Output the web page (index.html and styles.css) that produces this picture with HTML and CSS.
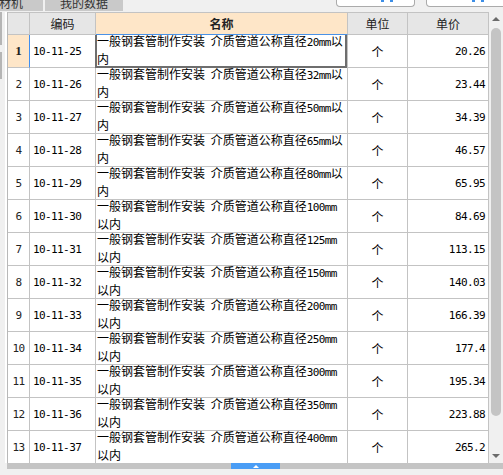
FILE: index.html
```html
<!DOCTYPE html>
<html lang="zh-CN">
<head>
<meta charset="utf-8">
<title>定额列表</title>
<link rel="stylesheet" href="styles.css">
</head>
<body>
<div class="app">
  <div class="topbar">
    <div class="tab tab1"><span>人材机</span></div>
    <div class="tab tab2"><span>我的数据</span></div>
    <div class="btn btn1"><i></i></div>
    <div class="btn btn2"><i></i></div>
  </div>
  <div class="main">
    <div class="leftpanel"><i class="seg s1"></i><i class="seg s2"></i></div>
    <div class="grid">
      <div class="row head">
        <div class="c rn"></div>
        <div class="c code">编码</div>
        <div class="c name sel">名称</div>
        <div class="c unit">单位</div>
        <div class="c price">单价</div>
      </div>
      <div class="row cur">
        <div class="c rn">1</div>
        <div class="c code"><span class="num">10-11-25</span></div>
        <div class="c name"><span>一般钢套管制作安装 介质管道公称直径<span class="num">20mm</span>以<br>内</span></div>
        <div class="c unit">个</div>
        <div class="c price"><span class="num">20.26</span></div>
      </div>
      <div class="row">
        <div class="c rn">2</div>
        <div class="c code"><span class="num">10-11-26</span></div>
        <div class="c name"><span>一般钢套管制作安装 介质管道公称直径<span class="num">32mm</span>以<br>内</span></div>
        <div class="c unit">个</div>
        <div class="c price"><span class="num">23.44</span></div>
      </div>
      <div class="row">
        <div class="c rn">3</div>
        <div class="c code"><span class="num">10-11-27</span></div>
        <div class="c name"><span>一般钢套管制作安装 介质管道公称直径<span class="num">50mm</span>以<br>内</span></div>
        <div class="c unit">个</div>
        <div class="c price"><span class="num">34.39</span></div>
      </div>
      <div class="row">
        <div class="c rn">4</div>
        <div class="c code"><span class="num">10-11-28</span></div>
        <div class="c name"><span>一般钢套管制作安装 介质管道公称直径<span class="num">65mm</span>以<br>内</span></div>
        <div class="c unit">个</div>
        <div class="c price"><span class="num">46.57</span></div>
      </div>
      <div class="row">
        <div class="c rn">5</div>
        <div class="c code"><span class="num">10-11-29</span></div>
        <div class="c name"><span>一般钢套管制作安装 介质管道公称直径<span class="num">80mm</span>以<br>内</span></div>
        <div class="c unit">个</div>
        <div class="c price"><span class="num">65.95</span></div>
      </div>
      <div class="row">
        <div class="c rn">6</div>
        <div class="c code"><span class="num">10-11-30</span></div>
        <div class="c name"><span>一般钢套管制作安装 介质管道公称直径<span class="num">100mm</span><br>以内</span></div>
        <div class="c unit">个</div>
        <div class="c price"><span class="num">84.69</span></div>
      </div>
      <div class="row">
        <div class="c rn">7</div>
        <div class="c code"><span class="num">10-11-31</span></div>
        <div class="c name"><span>一般钢套管制作安装 介质管道公称直径<span class="num">125mm</span><br>以内</span></div>
        <div class="c unit">个</div>
        <div class="c price"><span class="num">113.15</span></div>
      </div>
      <div class="row">
        <div class="c rn">8</div>
        <div class="c code"><span class="num">10-11-32</span></div>
        <div class="c name"><span>一般钢套管制作安装 介质管道公称直径<span class="num">150mm</span><br>以内</span></div>
        <div class="c unit">个</div>
        <div class="c price"><span class="num">140.03</span></div>
      </div>
      <div class="row">
        <div class="c rn">9</div>
        <div class="c code"><span class="num">10-11-33</span></div>
        <div class="c name"><span>一般钢套管制作安装 介质管道公称直径<span class="num">200mm</span><br>以内</span></div>
        <div class="c unit">个</div>
        <div class="c price"><span class="num">166.39</span></div>
      </div>
      <div class="row">
        <div class="c rn">10</div>
        <div class="c code"><span class="num">10-11-34</span></div>
        <div class="c name"><span>一般钢套管制作安装 介质管道公称直径<span class="num">250mm</span><br>以内</span></div>
        <div class="c unit">个</div>
        <div class="c price"><span class="num">177.4</span></div>
      </div>
      <div class="row">
        <div class="c rn">11</div>
        <div class="c code"><span class="num">10-11-35</span></div>
        <div class="c name"><span>一般钢套管制作安装 介质管道公称直径<span class="num">300mm</span><br>以内</span></div>
        <div class="c unit">个</div>
        <div class="c price"><span class="num">195.34</span></div>
      </div>
      <div class="row">
        <div class="c rn">12</div>
        <div class="c code"><span class="num">10-11-36</span></div>
        <div class="c name"><span>一般钢套管制作安装 介质管道公称直径<span class="num">350mm</span><br>以内</span></div>
        <div class="c unit">个</div>
        <div class="c price"><span class="num">223.88</span></div>
      </div>
      <div class="row">
        <div class="c rn">13</div>
        <div class="c code"><span class="num">10-11-37</span></div>
        <div class="c name"><span>一般钢套管制作安装 介质管道公称直径<span class="num">400mm</span><br>以内</span></div>
        <div class="c unit">个</div>
        <div class="c price"><span class="num">265.2</span></div>
      </div>
    </div>
    <div class="vscroll">
      <span class="arrow up"></span>
      <span class="thumb"></span>
      <span class="arrow down"></span>
    </div>
  </div>
  <div class="hbar"><div class="hthumb"><span class="tri"></span></div></div>
  <div class="bottom"></div>
</div>
</body>
</html>
```
FILE: styles.css
```css
* { box-sizing: border-box; }
html, body { margin: 0; padding: 0; }
body {
  background: #f0f0f0;
  font-family: "Noto Sans CJK SC", "Noto Sans", sans-serif;
  font-size: 12px;
  color: #000;
  width: 503px;
  height: 475px;
  overflow: hidden;
}
.app { display: flex; flex-direction: column; width: 503px; height: 475px; }

/* top bar */
.topbar {
  display: flex;
  height: 12px;
  overflow: hidden;
  background: #f0f0f0;
  flex: none;
}
.tab {
  flex: none;
  height: 11px;
  background: #c9c9c9;
  overflow: hidden;
  font-size: 12px;
  line-height: 12px;
  color: #333;
  white-space: nowrap;
}
.tab span { display: block; margin-top: -3px; }
.tab1 { width: 43px; }
.tab1 span { margin-left: -13px; }
.tab2 { width: 78px; margin-left: 2px; text-align: center; }
.btn {
  flex: none;
  height: 7px;
  background: #fff;
  border: 1px solid #ababab;
  border-top: 0;
  border-radius: 0 0 4px 4px;
  position: relative;
}
.btn1 { width: 79px; margin-left: 213px; }
.btn2 { width: 80px; margin-left: 11px; }
.btn i {
  position: absolute;
  top: 0;
  width: 12px;
  height: 2px;
  border-left: 3px solid #3d8ee6;
  border-right: 3px solid #3d8ee6;
}
.btn1 i { left: 44px; }
.btn2 i { left: 45px; }

/* main */
.main { display: flex; height: 451px; flex: none; }
.leftpanel {
  width: 7px;
  flex: none;
  background: linear-gradient(to right, #f0f0f0 0 5px, #fff 5px 7px);
  display: flex;
  flex-direction: column;
}
.seg { display: block; width: 2px; background: #b5b5b5; }
.s1 { height: 33px; }
.s2 { height: 27px; margin-top: 7px; }

.grid {
  width: 482px;
  flex: none;
  border-left: 1px solid #b8b8b8;
  background: #fff;
  overflow: hidden;
}
.row {
  display: grid;
  grid-template-columns: 22px 66px 252px 60px 81px;
  height: 33px;
}
.c {
  border-right: 1px solid #c3c3c3;
  border-bottom: 1px solid #c3c3c3;
  display: flex;
  align-items: center;
  position: relative;
  white-space: nowrap;
}
.rn {
  justify-content: center;
  font-family: "DejaVu Sans Mono", monospace;
  font-size: 11px;
  letter-spacing: -0.6px;
  color: #222;
}
.code { padding-left: 3px; }
.name { align-items: flex-start; padding-left: 1px; line-height: 16px; word-spacing: 3px; }
.name > span { display: block; margin-top: -2px; }
.unit { justify-content: center; }
.price { justify-content: flex-end; padding-right: 3px; }
.num {
  font-family: "DejaVu Sans Mono", monospace;
  font-size: 11px;
  letter-spacing: -0.6px;
}

.head {
  height: 23px;
  border-top: 1px solid #c3c3c3;
}
.head .c {
  background: #e6e6e6;
  justify-content: center;
  align-items: center;
  font-size: 12px;
  color: #222;
  line-height: 16px;
  padding: 0;
}
.head .name.sel {
  background: #fee6c8;
  font-weight: bold;
  border-bottom-color: #4a92e6;
}

.cur .rn { background: #fee6c8; font-weight: bold; font-family: "Liberation Serif", serif; font-size: 13px; letter-spacing: 0; }
.cur .rn { border-right-color: #3f8ff0; }
.cur .name::after {
  content: "";
  position: absolute;
  left: -1px;
  right: 0;
  top: 0;
  bottom: -1px;
  border: 2px solid #6e6e6e;
  border-top: 0;
  pointer-events: none;
}

/* vertical scrollbar */
.vscroll {
  width: 14px;
  flex: none;
  background: #f0f0f0;
  display: flex;
  flex-direction: column;
  align-items: center;
}
.arrow {
  display: block;
  width: 0;
  height: 0;
  border-left: 4px solid transparent;
  border-right: 4px solid transparent;
}
.up { border-bottom: 4px solid #6b6b6b; margin-top: 5px; }
.thumb {
  display: block;
  width: 10px;
  height: 388px;
  margin-top: 7px;
  background: #c4c4c4;
  border-radius: 5px;
}
.down { border-top: 4px solid #6b6b6b; margin-top: auto; margin-bottom: 5px; }

/* horizontal splitter bar */
.hbar {
  height: 6px;
  flex: none;
  margin-left: 7px;
  background: #c4c4c4;
  display: flex;
}
.hthumb {
  width: 49px;
  margin-left: 224px;
  background: #4a9df5;
  display: flex;
  justify-content: center;
  align-items: center;
}
.tri {
  display: block;
  width: 0;
  height: 0;
  border-left: 3px solid transparent;
  border-right: 3px solid transparent;
  border-bottom: 3px solid #fff;
}
.bottom { height: 6px; flex: none; background: #f0f0f0; }
```
